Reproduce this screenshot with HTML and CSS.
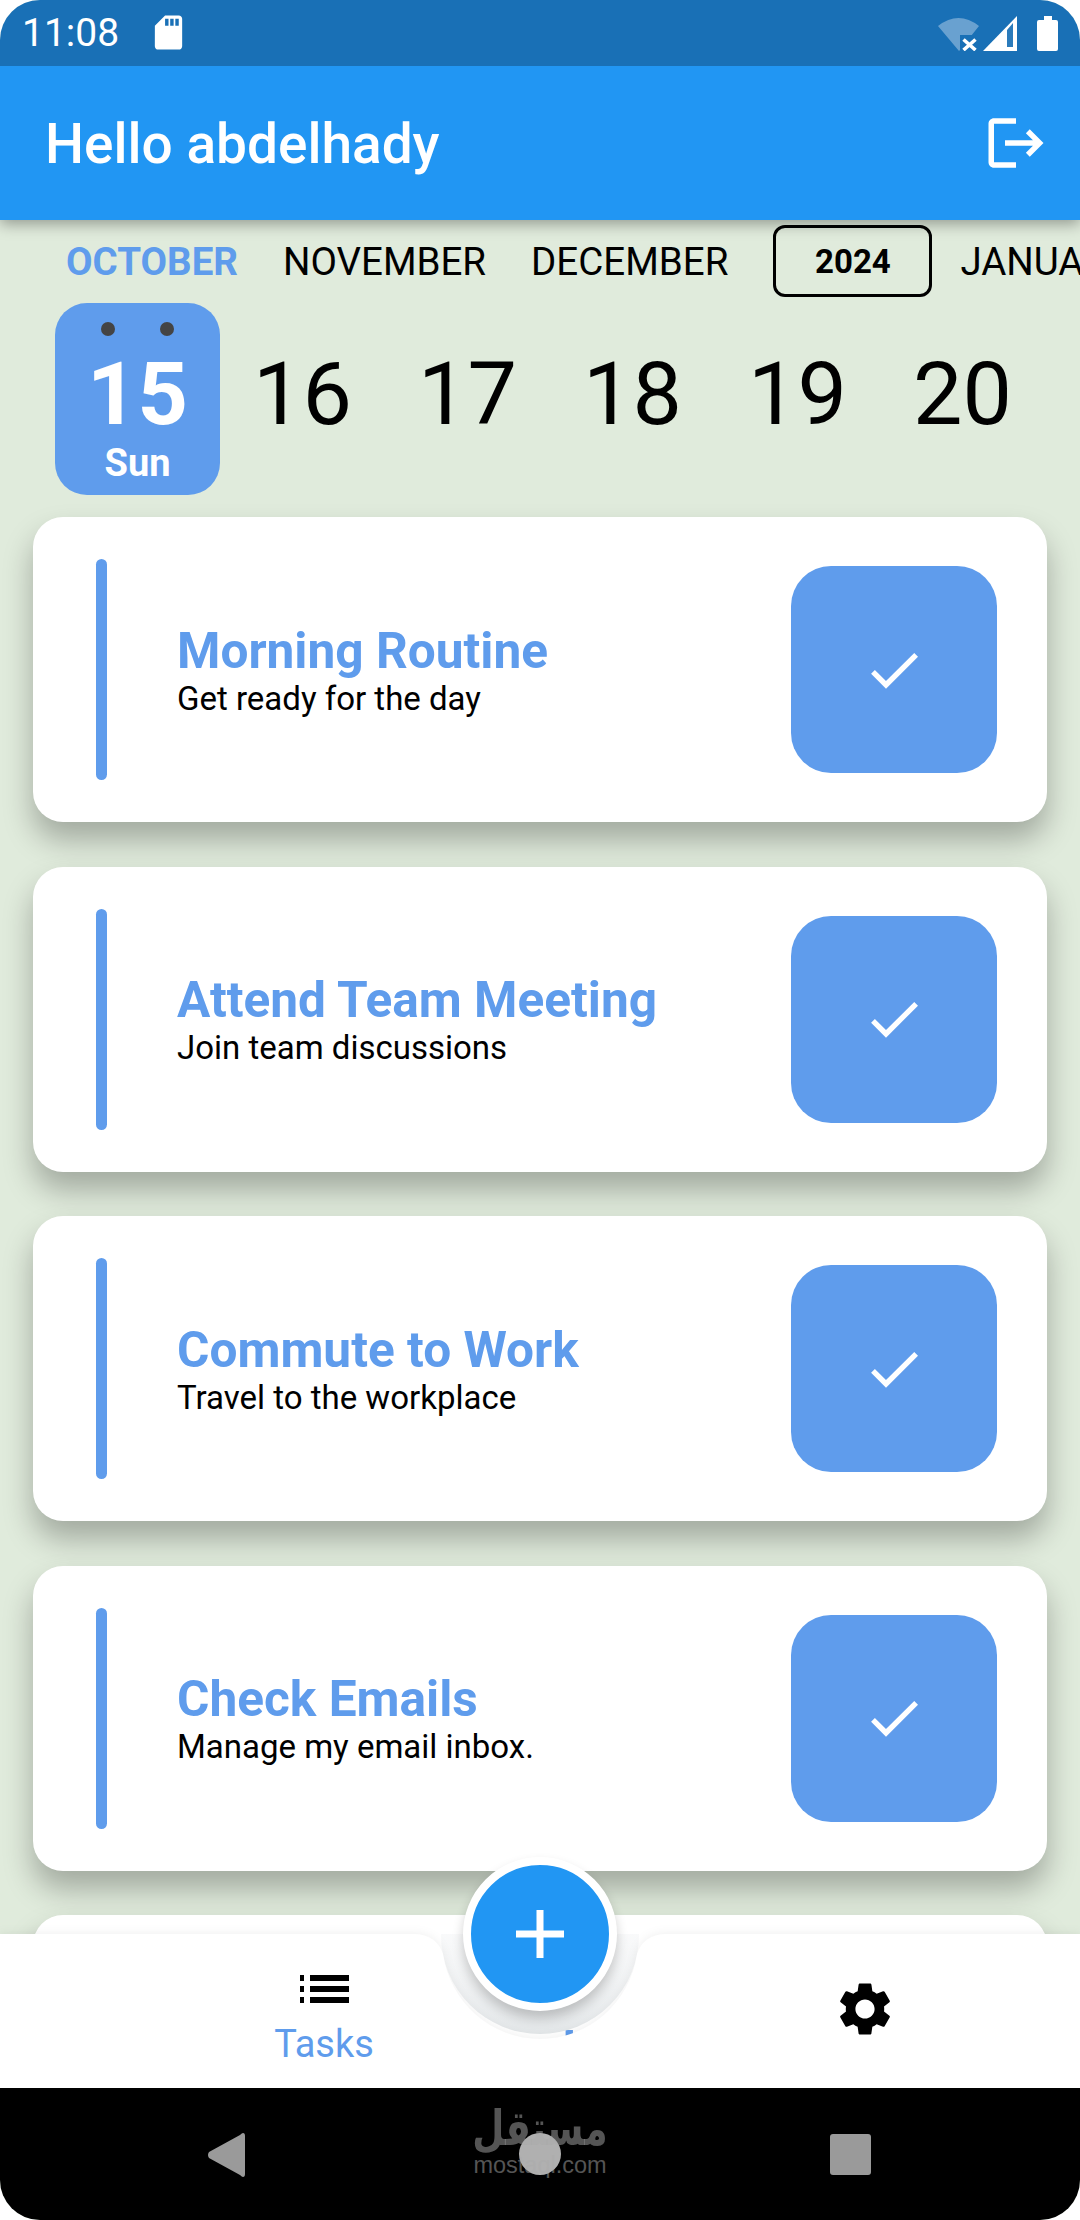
FILE: index.html
```html
<!DOCTYPE html>
<html lang="en">
<head>
  <meta charset="UTF-8" />
  <meta name="viewport" content="width=device-width, initial-scale=1.0"/>
  <title>Tasks</title>
  <link rel="stylesheet" href="styles.css">
</head>
<body>
  <div class="phone">
    <div class="status-bar">
      <span class="clock">11:08</span>
      <svg class="sd-icon" viewBox="0 0 24 24" width="41" height="41"><path fill="#fff" d="M18 2h-8L4.02 8 4 20c0 1.1.9 2 2 2h12c1.1 0 2-.9 2-2V4c0-1.1-.9-2-2-2zm-6 6h-2V4h2v4zm3 0h-2V4h2v4zm3 0h-2V4h2v4z"/></svg>
      <div class="status-right">
        <svg viewBox="0 0 41 35" width="41" height="35">
          <path fill="#69a1d0" d="M0 10Q20.500-6 41 10L33.800 19H22V34L21 35Z"/>
          <path stroke="#fff" stroke-width="3.600" d="M25.500 23.500L37.500 34M37.500 23.500L25.500 34"/>
        </svg>
        <svg class="signal" viewBox="0 0 34 35" width="34" height="35">
          <path fill="#fff" d="M34 0V35H0Z"/>
          <path fill="#2b7bbb" d="M24 14L30 7V31H24Z"/>
        </svg>
        <svg class="battery" viewBox="0 0 21 35" width="21" height="35">
          <path fill="#fff" d="M7 0H15V4H19Q21 4 21 6V33Q21 35 19 35H2Q0 35 0 33V6Q0 4 2 4H7Z"/>
        </svg>
      </div>
    </div>

    <header class="app-bar">
      <h1>Hello abdelhady</h1>
      <svg viewBox="0 0 24 24" width="66" height="66"><path fill="#fff" d="M17 7l-1.41 1.41L18.170 11H8v2h10.170l-2.580 2.580L17 17l5-5zM4 5h8V3H4c-1.100 0-2 .9-2 2v14c0 1.100.9 2 2 2h8v-2H4V5z"/></svg>
    </header>

    <main class="content">
      <div class="months">
        <span class="month active">OCTOBER</span>
        <span class="month">NOVEMBER</span>
        <span class="month">DECEMBER</span>
        <span class="year">2024</span>
        <span class="month">JANUARY</span>
      </div>

      <div class="dates">
        <div class="date-cell selected">
          <div class="dots"><i></i><i></i></div>
          <div class="date-num">15</div>
          <div class="date-day">Sun</div>
        </div>
        <div class="date-cell"><div class="date-num">16</div></div>
        <div class="date-cell"><div class="date-num">17</div></div>
        <div class="date-cell"><div class="date-num">18</div></div>
        <div class="date-cell"><div class="date-num">19</div></div>
        <div class="date-cell"><div class="date-num">20</div></div>
      </div>

      <div class="task-list">
        <div class="task-card">
          <div class="task-bar"></div>
          <div class="task-text">
            <div class="task-title">Morning Routine</div>
            <div class="task-sub">Get ready for the day</div>
          </div>
          <div class="task-check"><svg viewBox="0 0 24 24" width="64" height="64"><path fill="#fff" d="M9 16.170L4.830 12l-1.420 1.410L9 19 21 7l-1.410-1.410z"/></svg></div>
        </div>
        <div class="task-card">
          <div class="task-bar"></div>
          <div class="task-text">
            <div class="task-title">Attend Team Meeting</div>
            <div class="task-sub">Join team discussions</div>
          </div>
          <div class="task-check"><svg viewBox="0 0 24 24" width="64" height="64"><path fill="#fff" d="M9 16.170L4.830 12l-1.420 1.410L9 19 21 7l-1.410-1.410z"/></svg></div>
        </div>
        <div class="task-card">
          <div class="task-bar"></div>
          <div class="task-text">
            <div class="task-title">Commute to Work</div>
            <div class="task-sub">Travel to the workplace</div>
          </div>
          <div class="task-check"><svg viewBox="0 0 24 24" width="64" height="64"><path fill="#fff" d="M9 16.170L4.830 12l-1.420 1.410L9 19 21 7l-1.410-1.410z"/></svg></div>
        </div>
        <div class="task-card">
          <div class="task-bar"></div>
          <div class="task-text">
            <div class="task-title">Check Emails</div>
            <div class="task-sub">Manage my email inbox.</div>
          </div>
          <div class="task-check"><svg viewBox="0 0 24 24" width="64" height="64"><path fill="#fff" d="M9 16.170L4.830 12l-1.420 1.410L9 19 21 7l-1.410-1.410z"/></svg></div>
        </div>
        <div class="task-card">
          <div class="task-bar"></div>
          <div class="task-text">
            <div class="task-title">Breakfast, with a List</div>
            <div class="task-sub">Eat before leaving</div>
          </div>
          <div class="task-check"><svg viewBox="0 0 24 24" width="64" height="64"><path fill="#fff" d="M9 16.170L4.830 12l-1.420 1.410L9 19 21 7l-1.410-1.410z"/></svg></div>
        </div>
      </div>
    </main>

    <nav class="bottom-nav">
      <svg class="nav-shape" viewBox="0 0 1080 154" width="1080" height="154">
        <defs>
          <linearGradient id="halo" x1="0" y1="0" x2="0" y2="1">
            <stop offset="0" stop-color="#eef0f2" stop-opacity="0.4"/>
            <stop offset="1" stop-color="#dfe3e5"/>
          </linearGradient>
        </defs>
        <path fill="url(#halo)" fill-opacity="0.9" d="M441 0H639V1A99 99 0 0 1 441 1Z"/>
        <path class="nav-fill" fill="#fff" d="M0 0H413C430 0 439 8 443 20A98 99 0 0 0 637 20C641 8 650 0 667 0H1080V154H0Z"/>
      </svg>
      <div class="nav-item tasks">
        <svg class="list-icon" viewBox="0 0 49 28" width="49" height="28">
          <path fill="#000" d="M0 0H4V6H0ZM10 0H49V6H10ZM0 11H4V17H0ZM10 11H49V17H10ZM0 22H4V28H0ZM10 22H49V28H10Z"/>
        </svg>
        <span>Tasks</span>
      </div>
      <div class="nav-item settings">
        <svg viewBox="0 0 24 24" width="64" height="64"><path fill="#000" d="M19.140 12.940c.04-.3.06-.61.06-.94 0-.32-.02-.64-.07-.94l2.030-1.580c.18-.14.23-.41.12-.61l-1.920-3.320c-.12-.22-.37-.29-.59-.22l-2.390.96c-.5-.38-1.030-.7-1.620-.94l-.36-2.540c-.04-.24-.24-.41-.48-.41h-3.840c-.24 0-.43.17-.47.41l-.36 2.540c-.59.24-1.130.57-1.620.94l-2.390-.96c-.22-.08-.47 0-.59.22L2.740 8.870c-.12.21-.08.47.12.61l2.030 1.580c-.05.3-.09.63-.09.94s.02.64.07.94l-2.030 1.580c-.18.14-.23.41-.12.61l1.920 3.320c.12.22.37.29.59.22l2.390-.96c.5.38 1.030.7 1.620.94l.36 2.540c.05.24.24.41.48.41h3.840c.24 0 .44-.17.47-.41l.36-2.540c.59-.24 1.130-.56 1.620-.94l2.390.96c.22.08.47 0 .59-.22l1.920-3.320c.12-.22.07-.47-.12-.61l-2.010-1.580zM12 15.600c-1.980 0-3.600-1.620-3.600-3.600s1.620-3.600 3.600-3.600 3.600 1.620 3.600 3.600-1.620 3.600-3.600 3.600z"/></svg>
      </div>
      <button class="fab">
        <svg viewBox="0 0 48 48" width="48" height="48"><path fill="#fff" d="M20.500 0H27.500V20.500H48V27.500H27.500V48H20.500V27.500H0V20.500H20.500Z"/></svg>
      </button>
    </nav>

    <div class="system-nav">
      <svg viewBox="0 0 38 44" width="38" height="44"><path fill="#9a9a9a" d="M36 0Q38 0 38 3V41Q38 44 36 44Q35 44 33 42L2 25Q0 22 2 19L33 2Q35 0 36 0Z"/></svg>
      <div class="home-btn"></div>
      <div class="recent-btn"></div>
      <div class="watermark">
        <div class="wm-arabic">مستقل</div>
        <div class="wm-latin">mostaql.com</div>
      </div>
    </div>
  </div>
</body>
</html>
```

FILE: styles.css
```css
* {
  box-sizing: border-box;
  margin: 0;
  padding: 0;
}

body {
  font-family: 'Roboto', sans-serif;
  background: #fff;
  width: 1080px;
  height: 2220px;
  overflow: hidden;
}

.phone {
  position: relative;
  width: 1080px;
  height: 2220px;
  display: flex;
  flex-direction: column;
  background: #e0ebdc;
  border-radius: 40px;
  overflow: hidden;
}

/* status bar */
.status-bar {
  height: 66px;
  flex-shrink: 0;
  background: #1970b6;
  display: flex;
  align-items: center;
  padding: 0 22px 0 22px;
  color: #fff;
  position: relative;
  z-index: 3;
}

.clock {
  font-size: 39px;
  width: 126px;
}

.sd-icon {
  margin-top: -2px;
}

.status-right {
  margin-left: auto;
  display: flex;
  align-items: center;
}

.signal {
  margin-left: 4px;
}

.battery {
  margin-left: 20px;
}

/* app bar */
.app-bar {
  height: 154px;
  flex-shrink: 0;
  background: #2196f3;
  display: flex;
  align-items: center;
  justify-content: space-between;
  padding: 0 31px 0 45px;
  box-shadow: 0 4px 14px rgba(0,0,0,0.35);
  position: relative;
  z-index: 2;
}

.app-bar h1 {
  font-size: 55px;
  font-weight: 500;
  color: #fff;
  padding-top: 2px;
}

/* months + dates */
.content {
  flex: 1;
  min-height: 0;
  overflow: hidden;
}

.months {
  display: flex;
  align-items: center;
  height: 72px;
  margin-top: 5px;
  padding-left: 66px;
  gap: 45px;
  white-space: nowrap;
  overflow: hidden;
}

.month {
  font-size: 38.500px;
  color: #000;
}

.month.active {
  color: #5f9cec;
  font-weight: 700;
}

.year {
  width: 159px;
  height: 72px;
  flex-shrink: 0;
  display: flex;
  align-items: center;
  justify-content: center;
  border: 3px solid #000;
  border-radius: 12px;
  font-size: 33px;
  font-weight: 700;
  margin-right: -17px;
}

.dates {
  display: flex;
  margin-top: 6px;
  padding-left: 55px;
}

.date-cell {
  width: 165px;
  height: 192px;
  padding-top: 33px;
  display: flex;
  flex-direction: column;
  align-items: center;
  flex-shrink: 0;
  color: #000;
}

.date-cell.selected {
  padding-top: 19px;
  background: #5f9cec;
  border-radius: 32px;
  color: #fff;
}

.dots {
  display: flex;
  gap: 45px;
  height: 14px;
}

.dots i {
  width: 14px;
  height: 14px;
  border-radius: 50%;
  background: #444;
}

.date-num {
  font-size: 88px;
  line-height: 88px;
  margin-top: 14px;
}

.selected .date-num {
  font-weight: 700;
}

.date-day {
  font-size: 38px;
  font-weight: 700;
  line-height: 40px;
  margin-top: 5px;
}

/* tasks */
.task-list {
  display: flex;
  flex-direction: column;
  gap: 44.500px;
  margin-top: 22px;
  padding: 0 33px;
}

.task-card {
  height: 305px;
  flex-shrink: 0;
  background: #fff;
  border-radius: 30px;
  display: flex;
  align-items: center;
  padding: 0 50px 0 63px;
  box-shadow: 0 18px 30px rgba(0,0,0,0.28);
}

.task-bar {
  width: 11px;
  height: 221px;
  border-radius: 6px;
  background: #5f9cec;
}

.task-text {
  flex: 1;
  margin-left: 70px;
  padding-top: 5px;
}

.task-title {
  font-size: 49.600px;
  font-weight: 700;
  line-height: 52px;
  color: #5f9cec;
}

.task-sub {
  font-size: 33px;
  line-height: 43px;
  color: #000;
}

.task-check {
  width: 206px;
  height: 207px;
  border-radius: 40px;
  background: #5f9cec;
  display: flex;
  align-items: center;
  justify-content: center;
}

/* bottom nav sits over the list */
.bottom-nav {
  position: absolute;
  left: 0;
  right: 0;
  top: 1934px;
  height: 154px;
  z-index: 4;
}

.nav-shape {
  position: absolute;
  left: 0;
  top: 0;
  overflow: visible;
}

.nav-fill {
  filter: drop-shadow(0 -1px 5px rgba(0,0,0,0.06));
}

.nav-item {
  position: absolute;
  display: flex;
  flex-direction: column;
  align-items: center;
}

.tasks {
  left: 224px;
  width: 200px;
  top: 41px;
  color: #5f9cec;
  font-size: 38px;
}

.tasks span {
  margin-top: 17px;
  line-height: 48px;
}

.settings {
  left: 833px;
  top: 43px;
}

.fab {
  position: absolute;
  left: 463px;
  top: -77px;
  width: 154px;
  height: 154px;
  border: 8px solid #fff;
  border-radius: 50%;
  background: #2196f3;
  display: flex;
  align-items: center;
  justify-content: center;
  box-shadow: 0 7px 12px rgba(0,0,0,0.2);
}

/* android nav */
.system-nav {
  position: relative;
  height: 132px;
  flex-shrink: 0;
  background: #000;
  z-index: 5;
}

.system-nav svg {
  position: absolute;
  left: 207px;
  top: 45px;
}

.home-btn {
  position: absolute;
  left: 519px;
  top: 45px;
  width: 42px;
  height: 42px;
  border-radius: 50%;
  background: #b0b0b0;
}

.recent-btn {
  position: absolute;
  left: 830px;
  top: 46px;
  width: 41px;
  height: 41px;
  border-radius: 3px;
  background: #9a9a9a;
}

.watermark {
  position: absolute;
  left: 440px;
  top: 18px;
  width: 200px;
  text-align: center;
  color: rgba(170,170,170,0.5);
}

.wm-arabic {
  font-family: 'DejaVu Sans', sans-serif;
  font-size: 37px;
  font-weight: 700;
  line-height: 46px;
  transform: scaleY(1.3);
}

.wm-latin {
  font-family: 'Liberation Sans', sans-serif;
  font-size: 23.500px;
  line-height: 26px;
}
```
